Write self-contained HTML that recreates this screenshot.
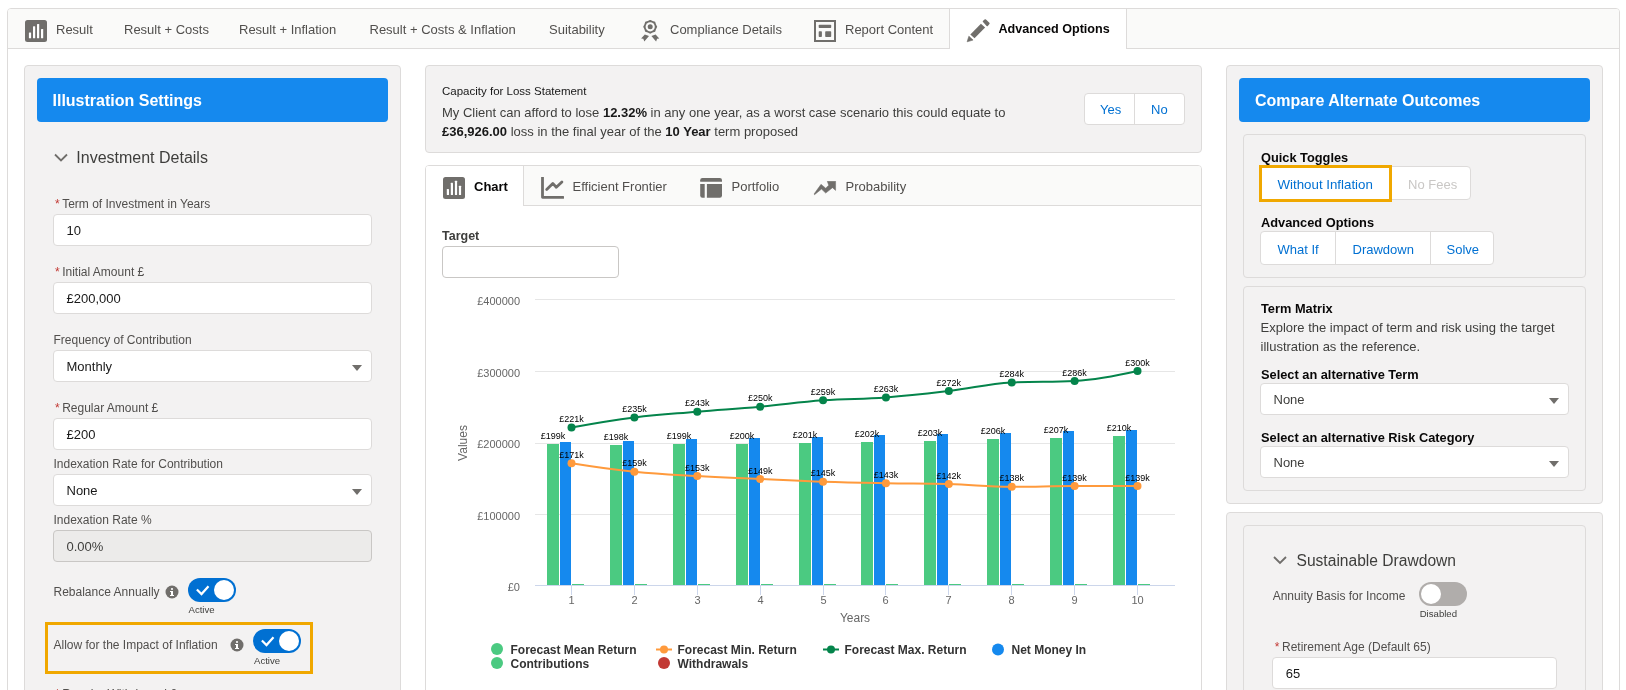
<!DOCTYPE html>
<html><head><meta charset="utf-8">
<style>
*{box-sizing:border-box;margin:0;padding:0}
.wrap{position:absolute;left:0;top:0;width:1626px;height:690px;will-change:transform}
html,body{width:1626px;height:690px;overflow:hidden;background:#fff;font-family:"Liberation Sans",sans-serif;color:#3e3e3c}
.a{position:absolute}
.t{position:absolute;line-height:1;white-space:nowrap}
.box{position:absolute;border:1px solid #dddbda;border-radius:4px;background:#f3f2f2}
.inp{position:absolute;border:1px solid #dddbda;border-radius:4px;background:#fff}
.hdr{position:absolute;background:#1589ee;border-radius:4px}
.hdrt{position:absolute;line-height:1;white-space:nowrap;color:#fff;font-weight:700;font-size:16px}
.tab{position:absolute;line-height:1;white-space:nowrap;font-size:13px;color:#514f4d;top:23px}
.lbl{position:absolute;line-height:1;white-space:nowrap;font-size:12px;color:#514f4d}
.req{color:#c23934}
.val{position:absolute;line-height:1;white-space:nowrap;font-size:13px;color:#181818}
.link{color:#0070d2}
.btn{position:absolute;border:1px solid #dddbda;background:#fff}
.tri{position:absolute;width:0;height:0;border-left:5px solid transparent;border-right:5px solid transparent;border-top:6px solid #706e6b}
</style></head><body><div class="wrap">

<!-- OUTER CARD -->
<div class="a" style="left:7px;top:8px;width:1613px;height:700px;border:1px solid #dddbda;border-radius:4px;background:#fff"></div>
<div class="a" style="left:8px;top:9px;width:1611px;height:40px;background:#fafaf9;border-bottom:1px solid #dddbda;border-radius:3px 3px 0 0"></div>
<!-- active tab -->
<div class="a" style="left:949px;top:9px;width:178px;height:40px;background:#fff;border-left:1px solid #dddbda;border-right:1px solid #dddbda"></div>

<!-- tab icons -->
<svg class="a" style="left:25px;top:20px" width="22" height="22" viewBox="0 0 22 22"><rect x="0" y="0" width="22" height="22" rx="2.5" fill="#706e6b"/><rect x="3.9" y="12.5" width="2.2" height="5.7" rx="0.5" fill="#fff"/><rect x="8" y="6.3" width="2.2" height="11.9" rx="0.5" fill="#fff"/><rect x="12" y="4" width="2.2" height="14.2" rx="0.5" fill="#fff"/><rect x="16" y="8.9" width="2.2" height="9.3" rx="0.5" fill="#fff"/></svg>
<div class="tab" style="left:56px">Result</div>
<div class="tab" style="left:124px">Result + Costs</div>
<div class="tab" style="left:239px">Result + Inflation</div>
<div class="tab" style="left:369.5px">Result + Costs &amp; Inflation</div>
<div class="tab" style="left:549px">Suitability</div>
<svg class="a" style="left:640px;top:20px" width="21" height="23" viewBox="0 0 21 23"><polygon points="10.20,-0.20 12.61,0.98 15.15,1.85 16.02,4.39 17.20,6.80 16.02,9.21 15.15,11.75 12.61,12.62 10.20,13.80 7.79,12.62 5.25,11.75 4.38,9.21 3.20,6.80 4.38,4.39 5.25,1.85 7.79,0.98" fill="#706e6b"/><circle cx="10.2" cy="6.8" r="4.6" fill="#fafaf9"/><circle cx="10.2" cy="6.8" r="2.5" fill="#706e6b"/><polygon points="4.8,14.4 9,16.1 4.3,21.6 3.3,18.8 1.1,18.6" fill="#706e6b"/><polygon points="15.6,14.4 11.4,16.1 16.1,21.6 17.1,18.8 19.3,18.6" fill="#706e6b"/></svg>
<div class="tab" style="left:670px">Compliance Details</div>
<svg class="a" style="left:814px;top:20px" width="22" height="22" viewBox="0 0 22 22"><rect x="1" y="1" width="20" height="20" fill="none" stroke="#706e6b" stroke-width="2"/><rect x="4.7" y="4.7" width="12.5" height="3.2" rx="0.7" fill="#706e6b"/><rect x="4.7" y="11.2" width="3.2" height="5.8" rx="0.7" fill="#706e6b"/><rect x="11.2" y="11.2" width="6" height="5.8" rx="0.7" fill="#706e6b"/></svg>
<div class="tab" style="left:845px">Report Content</div>
<svg class="a" style="left:966px;top:19px" width="24" height="24" viewBox="0 0 24 24"><polygon points="14.94,4.82 19.12,8.52 8.53,19.35 4.34,15.41" fill="#706e6b"/><polygon points="2.87,17.14 7.05,21.08 1.14,22.8" fill="#706e6b" stroke="#706e6b" stroke-width="0.6" stroke-linejoin="round"/><polygon points="17.6,2.4 19.4,1.0 22.8,4.4 21.2,6.4" fill="#706e6b" stroke="#706e6b" stroke-width="1.6" stroke-linejoin="round"/></svg>
<div class="tab" style="left:998.5px;top:23.4px;font-weight:700;color:#080707;font-size:12.6px">Advanced Options</div>

<!-- LEFT PANEL -->
<div class="box" style="left:24px;top:65px;width:377px;height:640px"></div>
<div class="hdr" style="left:37px;top:78px;width:351px;height:44px"></div>
<div class="hdrt" style="left:52.5px;top:93px">Illustration Settings</div>

<svg class="a" style="left:53px;top:152px" width="16" height="12" viewBox="0 0 16 12"><path d="M2 2.5 L8 8.5 L14 2.5" fill="none" stroke="#706e6b" stroke-width="1.8"/></svg>
<div class="t" style="left:76.3px;top:149.5px;font-size:16px;color:#3e3e3c">Investment Details</div>

<div class="lbl" style="left:55px;top:198.0px"><span class="req">*</span><span style="margin-left:2.5px">Term of Investment in Years</span></div>
<div class="inp" style="left:53px;top:214px;width:319px;height:32px"></div>
<div class="val" style="left:66.5px;top:224px">10</div>

<div class="lbl" style="left:55px;top:266.3px"><span class="req">*</span><span style="margin-left:2.5px">Initial Amount £</span></div>
<div class="inp" style="left:53px;top:282px;width:319px;height:32px"></div>
<div class="val" style="left:66.5px;top:292px">£200,000</div>

<div class="lbl" style="left:53.5px;top:334.3px">Frequency of Contribution</div>
<div class="inp" style="left:53px;top:350px;width:319px;height:32px"></div>
<div class="val" style="left:66.5px;top:360px">Monthly</div>
<div class="tri" style="left:352px;top:365px"></div>

<div class="lbl" style="left:55px;top:402.3px"><span class="req">*</span><span style="margin-left:2.5px">Regular Amount £</span></div>
<div class="inp" style="left:53px;top:418px;width:319px;height:32px"></div>
<div class="val" style="left:66.5px;top:428px">£200</div>

<div class="lbl" style="left:53.5px;top:458.3px">Indexation Rate for Contribution</div>
<div class="inp" style="left:53px;top:474px;width:319px;height:32px"></div>
<div class="val" style="left:66.5px;top:484px">None</div>
<div class="tri" style="left:352px;top:489px"></div>

<div class="lbl" style="left:53.5px;top:514.3px">Indexation Rate %</div>
<div class="inp" style="left:53px;top:530px;width:319px;height:32px;background:#ecebea;border-color:#c9c7c5"></div>
<div class="val" style="left:66.5px;top:540px;color:#3e3e3c">0.00%</div>

<div class="lbl" style="left:53.5px;top:586.3px">Rebalance Annually</div>
<svg class="a" style="left:165px;top:585px" width="14" height="14" viewBox="0 0 14 14"><circle cx="7" cy="7" r="6.5" fill="#706e6b"/><rect x="6" y="6" width="2" height="5" fill="#fff"/><circle cx="7" cy="4" r="1.1" fill="#fff"/><rect x="5" y="6" width="2" height="1" fill="#fff"/><rect x="5" y="10" width="4" height="1" fill="#fff"/></svg>
<svg class="a" style="left:188px;top:578px" width="48" height="24" viewBox="0 0 48 24"><rect x="0" y="0" width="48" height="24" rx="12" fill="#0070d2"/><circle cx="36" cy="12" r="10" fill="#fff"/><path d="M8.9 11.5 L13.5 16.1 L20.5 8.2" fill="none" stroke="#fff" stroke-width="2.2"/></svg>
<div class="t" style="left:188.5px;top:605px;font-size:9.6px;color:#3e3e3c">Active</div>

<div class="a" style="left:45px;top:622px;width:268px;height:52px;border:3px solid #f0a800"></div>
<div class="lbl" style="left:53.5px;top:639.4px">Allow for the Impact of Inflation</div>
<svg class="a" style="left:230px;top:638px" width="14" height="14" viewBox="0 0 14 14"><circle cx="7" cy="7" r="6.5" fill="#706e6b"/><rect x="6" y="6" width="2" height="5" fill="#fff"/><circle cx="7" cy="4" r="1.1" fill="#fff"/><rect x="5" y="6" width="2" height="1" fill="#fff"/><rect x="5" y="10" width="4" height="1" fill="#fff"/></svg>
<svg class="a" style="left:253px;top:629px" width="48" height="24" viewBox="0 0 48 24"><rect x="0" y="0" width="48" height="24" rx="12" fill="#0070d2"/><circle cx="36" cy="12" r="10" fill="#fff"/><path d="M8.9 11.5 L13.5 16.1 L20.5 8.2" fill="none" stroke="#fff" stroke-width="2.2"/></svg>
<div class="t" style="left:254px;top:656px;font-size:9.6px;color:#3e3e3c">Active</div>

<div class="lbl" style="left:55px;top:687.7px"><span class="req">*</span><span style="margin-left:2.5px">Regular Withdrawal £</span></div>

<!-- MIDDLE -->
<div class="box" style="left:425px;top:65px;width:777px;height:88px"></div>
<div class="t" style="left:442px;top:85.8px;font-size:11.5px;color:#181818">Capacity for Loss Statement</div>
<div class="t" style="left:442px;top:105.5px;font-size:13px;color:#3e3e3c">My Client can afford to lose <b style="color:#181818">12.32%</b> in any one year, as a worst case scenario this could equate to</div>
<div class="t" style="left:442px;top:124.7px;font-size:13px;color:#3e3e3c"><b style="color:#181818">£36,926.00</b> loss in the final year of the <b style="color:#181818">10 Year</b> term proposed</div>
<div class="btn" style="left:1084px;top:93px;width:101px;height:32px;border-radius:4px"></div>
<div class="a" style="left:1134px;top:94px;width:1px;height:30px;background:#dddbda"></div>
<div class="t link" style="left:1100px;top:103px;font-size:13px">Yes</div>
<div class="t link" style="left:1151px;top:103px;font-size:13px">No</div>

<div class="a" style="left:425px;top:165px;width:777px;height:600px;border:1px solid #dddbda;border-radius:4px;background:#fff"></div>
<div class="a" style="left:426px;top:166px;width:775px;height:40px;background:#fafaf9;border-bottom:1px solid #dddbda;border-radius:3px 3px 0 0"></div>
<div class="a" style="left:426px;top:166px;width:98px;height:40px;background:#fff;border-right:1px solid #dddbda;border-radius:3px 0 0 0"></div>
<svg class="a" style="left:443px;top:177px" width="22" height="22" viewBox="0 0 22 22"><rect x="0" y="0" width="22" height="22" rx="2.5" fill="#706e6b"/><rect x="3.8" y="11.9" width="2.2" height="6.2" rx="0.5" fill="#fff"/><rect x="7.8" y="5.8" width="2.2" height="12.3" rx="0.5" fill="#fff"/><rect x="11.9" y="3.8" width="2.2" height="14.3" rx="0.5" fill="#fff"/><rect x="15.9" y="8.7" width="2.2" height="9.4" rx="0.5" fill="#fff"/></svg>
<div class="t" style="left:474px;top:179.5px;font-size:13px;font-weight:700;color:#080707">Chart</div>
<svg class="a" style="left:541px;top:177px" width="23" height="23" viewBox="0 0 23 23"><path d="M1.5 0.3 V20.3 H22" fill="none" stroke="#706e6b" stroke-width="2.8" stroke-linecap="round" stroke-linejoin="round"/><path d="M5.7 12.5 L11.8 6.4 L15.3 10.2 L20.9 4.9" fill="none" stroke="#706e6b" stroke-width="2.8" stroke-linecap="round" stroke-linejoin="round"/></svg>
<div class="t" style="left:572.5px;top:179.5px;font-size:13px;color:#514f4d">Efficient Frontier</div>
<svg class="a" style="left:700px;top:177px" width="23" height="22" viewBox="0 0 23 22"><path d="M0.2 3.2 Q0.2 1 2.4 1 H19.8 Q22 1 22 3.2 V4.7 H0.2 Z" fill="#706e6b"/><path d="M0.2 6.9 H4.7 V20.8 H2.4 Q0.2 20.8 0.2 18.6 Z" fill="#706e6b"/><path d="M6.9 6.9 H22 V18.6 Q22 20.8 19.8 20.8 H6.9 Z" fill="#706e6b"/></svg>
<div class="t" style="left:731.5px;top:179.5px;font-size:13px;color:#514f4d">Portfolio</div>
<svg class="a" style="left:813px;top:181px" width="24" height="15" viewBox="0 0 24 15"><polygon points="1.06,13 8,3.35 12.7,7.2 15.7,4.25 14.3,0.2 22.6,0.2 22.6,9.4 19.5,6.7 12.7,12.1 8.5,8.1 1.5,13.7" fill="#706e6b" stroke="#706e6b" stroke-width="0.5" stroke-linejoin="round"/></svg>
<div class="t" style="left:845.5px;top:179.5px;font-size:13px;color:#514f4d">Probability</div>

<div class="t" style="left:442px;top:229.8px;font-size:12.5px;font-weight:700;color:#3e3e3c">Target</div>
<div class="inp" style="left:442px;top:246px;width:177px;height:32px;border-color:#c9c7c5"></div>

<!-- RIGHT PANEL 1 -->
<div class="box" style="left:1226px;top:65px;width:377px;height:439px"></div>
<div class="hdr" style="left:1239px;top:78px;width:351px;height:44px"></div>
<div class="hdrt" style="left:1255px;top:93px">Compare Alternate Outcomes</div>

<div class="box" style="left:1243px;top:134px;width:343px;height:144px"></div>
<div class="t" style="left:1261px;top:151.8px;font-size:12.8px;font-weight:700;color:#080707">Quick Toggles</div>
<div class="btn" style="left:1259px;top:166px;width:212px;height:34px;border-radius:4px"></div>
<div class="t" style="left:1408px;top:178px;font-size:13px;color:#c9c7c5">No Fees</div>
<div class="a" style="left:1259px;top:165px;width:133px;height:37px;border:3px solid #f0a800;background:#fff"></div>
<div class="t link" style="left:1277.5px;top:178px;font-size:13.3px">Without Inflation</div>

<div class="t" style="left:1261px;top:216.8px;font-size:12.8px;font-weight:700;color:#080707">Advanced Options</div>
<div class="btn" style="left:1260px;top:231px;width:234px;height:34px;border-radius:4px"></div>
<div class="a" style="left:1335px;top:232px;width:1px;height:32px;background:#dddbda"></div>
<div class="a" style="left:1430px;top:232px;width:1px;height:32px;background:#dddbda"></div>
<div class="t link" style="left:1277.5px;top:243px;font-size:13px">What If</div>
<div class="t link" style="left:1352.5px;top:243px;font-size:13px">Drawdown</div>
<div class="t link" style="left:1446.5px;top:243px;font-size:13px">Solve</div>

<div class="box" style="left:1243px;top:286px;width:343px;height:205px"></div>
<div class="t" style="left:1261px;top:303.3px;font-size:12.8px;font-weight:700;color:#080707">Term Matrix</div>
<div class="t" style="left:1260.5px;top:321.4px;font-size:13px;color:#3e3e3c">Explore the impact of term and risk using the target</div>
<div class="t" style="left:1260.5px;top:340.3px;font-size:13px;color:#3e3e3c">illustration as the reference.</div>
<div class="t" style="left:1261px;top:368.8px;font-size:12.8px;font-weight:700;color:#080707">Select an alternative Term</div>
<div class="inp" style="left:1260px;top:383px;width:309px;height:32px"></div>
<div class="val" style="left:1273.5px;top:392.6px;color:#3e3e3c">None</div>
<div class="tri" style="left:1549px;top:398px"></div>
<div class="t" style="left:1261px;top:431.8px;font-size:12.8px;font-weight:700;color:#080707">Select an alternative Risk Category</div>
<div class="inp" style="left:1260px;top:446px;width:309px;height:32px"></div>
<div class="val" style="left:1273.5px;top:455.8px;color:#3e3e3c">None</div>
<div class="tri" style="left:1549px;top:461px"></div>

<!-- RIGHT PANEL 2 -->
<div class="box" style="left:1226px;top:512px;width:377px;height:300px"></div>
<div class="box" style="left:1243px;top:525px;width:343px;height:300px"></div>
<svg class="a" style="left:1272px;top:554px" width="16" height="12" viewBox="0 0 16 12"><path d="M2 3 L8 9 L14 3" fill="none" stroke="#706e6b" stroke-width="1.8"/></svg>
<div class="t" style="left:1296.5px;top:552.6px;font-size:15.6px;color:#3e3e3c">Sustainable Drawdown</div>
<div class="lbl" style="left:1272.7px;top:589.5px;font-size:12px">Annuity Basis for Income</div>
<svg class="a" style="left:1419px;top:582px" width="48" height="24" viewBox="0 0 48 24"><rect x="0" y="0" width="48" height="24" rx="12" fill="#b0adab"/><circle cx="12" cy="12" r="10" fill="#fff"/></svg>
<div class="t" style="left:1419.7px;top:608.5px;font-size:9.6px;color:#3e3e3c">Disabled</div>
<div class="lbl" style="left:1274.8px;top:641.2px"><span class="req">*</span><span style="margin-left:2.5px">Retirement Age (Default 65)</span></div>
<div class="inp" style="left:1272px;top:657px;width:285px;height:32px"></div>
<div class="val" style="left:1285.8px;top:666.7px">65</div>

<!-- CHART -->
<svg id="chart" class="a" style="left:0;top:0" width="1626" height="690" viewBox="0 0 1626 690" font-family="Liberation Sans, sans-serif">
<line x1="535" y1="299.5" x2="1175" y2="299.5" stroke="#e6e6e6" stroke-width="1"/>
<line x1="535" y1="371.5" x2="1175" y2="371.5" stroke="#e6e6e6" stroke-width="1"/>
<line x1="535" y1="443.5" x2="1175" y2="443.5" stroke="#e6e6e6" stroke-width="1"/>
<line x1="535" y1="514.5" x2="1175" y2="514.5" stroke="#e6e6e6" stroke-width="1"/>
<text x="520" y="305" text-anchor="end" font-size="11" fill="#666666">£400000</text>
<text x="520" y="376.5" text-anchor="end" font-size="11" fill="#666666">£300000</text>
<text x="520" y="448" text-anchor="end" font-size="11" fill="#666666">£200000</text>
<text x="520" y="519.5" text-anchor="end" font-size="11" fill="#666666">£100000</text>
<text x="520" y="590.5" text-anchor="end" font-size="11" fill="#666666">£0</text>
<text transform="translate(466.5,443) rotate(-90)" text-anchor="middle" font-size="12" fill="#666666">Values</text>
<rect x="547" y="444" width="12" height="141" fill="#4bca81"/>
<rect x="560" y="442" width="11" height="143" fill="#1589ee"/>
<rect x="572" y="584" width="12" height="1" fill="#4bca81"/>
<rect x="610" y="445" width="12" height="140" fill="#4bca81"/>
<rect x="623" y="441" width="11" height="144" fill="#1589ee"/>
<rect x="635" y="584" width="12" height="1" fill="#4bca81"/>
<rect x="673" y="444" width="12" height="141" fill="#4bca81"/>
<rect x="686" y="439" width="11" height="146" fill="#1589ee"/>
<rect x="698" y="584" width="12" height="1" fill="#4bca81"/>
<rect x="736" y="444" width="12" height="141" fill="#4bca81"/>
<rect x="749" y="438" width="11" height="147" fill="#1589ee"/>
<rect x="761" y="584" width="12" height="1" fill="#4bca81"/>
<rect x="799" y="443" width="12" height="142" fill="#4bca81"/>
<rect x="812" y="437" width="11" height="148" fill="#1589ee"/>
<rect x="824" y="584" width="12" height="1" fill="#4bca81"/>
<rect x="861" y="442" width="12" height="143" fill="#4bca81"/>
<rect x="874" y="435" width="11" height="150" fill="#1589ee"/>
<rect x="886" y="584" width="12" height="1" fill="#4bca81"/>
<rect x="924" y="441" width="12" height="144" fill="#4bca81"/>
<rect x="937" y="434" width="11" height="151" fill="#1589ee"/>
<rect x="949" y="584" width="12" height="1" fill="#4bca81"/>
<rect x="987" y="439" width="12" height="146" fill="#4bca81"/>
<rect x="1000" y="433" width="11" height="152" fill="#1589ee"/>
<rect x="1012" y="584" width="12" height="1" fill="#4bca81"/>
<rect x="1050" y="438" width="12" height="147" fill="#4bca81"/>
<rect x="1063" y="431" width="11" height="154" fill="#1589ee"/>
<rect x="1075" y="584" width="12" height="1" fill="#4bca81"/>
<rect x="1113" y="436" width="12" height="149" fill="#4bca81"/>
<rect x="1126" y="430" width="11" height="155" fill="#1589ee"/>
<rect x="1138" y="584" width="12" height="1" fill="#4bca81"/>
<line x1="535" y1="585.5" x2="1175" y2="585.5" stroke="#ccd6eb" stroke-width="1"/>
<line x1="571.5" y1="586" x2="571.5" y2="595" stroke="#ccd6eb" stroke-width="1"/>
<text x="571.5" y="604" text-anchor="middle" font-size="11" fill="#666666">1</text>
<line x1="634.5" y1="586" x2="634.5" y2="595" stroke="#ccd6eb" stroke-width="1"/>
<text x="634.5" y="604" text-anchor="middle" font-size="11" fill="#666666">2</text>
<line x1="697.5" y1="586" x2="697.5" y2="595" stroke="#ccd6eb" stroke-width="1"/>
<text x="697.5" y="604" text-anchor="middle" font-size="11" fill="#666666">3</text>
<line x1="760.5" y1="586" x2="760.5" y2="595" stroke="#ccd6eb" stroke-width="1"/>
<text x="760.5" y="604" text-anchor="middle" font-size="11" fill="#666666">4</text>
<line x1="823.5" y1="586" x2="823.5" y2="595" stroke="#ccd6eb" stroke-width="1"/>
<text x="823.5" y="604" text-anchor="middle" font-size="11" fill="#666666">5</text>
<line x1="885.5" y1="586" x2="885.5" y2="595" stroke="#ccd6eb" stroke-width="1"/>
<text x="885.5" y="604" text-anchor="middle" font-size="11" fill="#666666">6</text>
<line x1="948.5" y1="586" x2="948.5" y2="595" stroke="#ccd6eb" stroke-width="1"/>
<text x="948.5" y="604" text-anchor="middle" font-size="11" fill="#666666">7</text>
<line x1="1011.5" y1="586" x2="1011.5" y2="595" stroke="#ccd6eb" stroke-width="1"/>
<text x="1011.5" y="604" text-anchor="middle" font-size="11" fill="#666666">8</text>
<line x1="1074.5" y1="586" x2="1074.5" y2="595" stroke="#ccd6eb" stroke-width="1"/>
<text x="1074.5" y="604" text-anchor="middle" font-size="11" fill="#666666">9</text>
<line x1="1137.5" y1="586" x2="1137.5" y2="595" stroke="#ccd6eb" stroke-width="1"/>
<text x="1137.5" y="604" text-anchor="middle" font-size="11" fill="#666666">10</text>
<text x="855" y="622" text-anchor="middle" font-size="12" fill="#666666">Years</text>
<path d="M 571.50 463.24 C 571.50 463.24 609.23 469.24 634.39 471.81 C 659.55 474.39 672.12 474.68 697.28 476.11 C 722.44 477.54 735.01 477.82 760.17 478.97 C 785.33 480.11 797.90 480.97 823.06 481.82 C 848.22 482.68 860.79 482.83 885.95 483.25 C 911.11 483.68 923.68 483.25 948.84 483.97 C 974.00 484.69 986.57 486.83 1011.73 486.83 C 1036.89 486.83 1049.46 486.12 1074.62 486.12 C 1099.78 486.12 1137.51 486.12 1137.51 486.12" fill="none" stroke="#ff9a3c" stroke-width="2"/>
<path d="M 571.50 427.49 C 571.50 427.49 609.23 420.62 634.39 417.48 C 659.55 414.33 672.12 413.90 697.28 411.75 C 722.44 409.61 735.01 409.04 760.17 406.75 C 785.33 404.46 797.90 402.17 823.06 400.31 C 848.22 398.46 860.79 399.31 885.95 397.46 C 911.11 395.60 923.68 394.02 948.84 391.02 C 974.00 388.02 986.57 383.87 1011.73 382.44 C 1036.89 381.01 1049.46 382.44 1074.62 381.01 C 1099.78 379.58 1137.51 371.00 1137.51 371.00" fill="none" stroke="#04844b" stroke-width="2"/>
<circle cx="571.50" cy="463.24" r="4" fill="#ff9a3c"/>
<circle cx="634.39" cy="471.81" r="4" fill="#ff9a3c"/>
<circle cx="697.28" cy="476.11" r="4" fill="#ff9a3c"/>
<circle cx="760.17" cy="478.97" r="4" fill="#ff9a3c"/>
<circle cx="823.06" cy="481.82" r="4" fill="#ff9a3c"/>
<circle cx="885.95" cy="483.25" r="4" fill="#ff9a3c"/>
<circle cx="948.84" cy="483.97" r="4" fill="#ff9a3c"/>
<circle cx="1011.73" cy="486.83" r="4" fill="#ff9a3c"/>
<circle cx="1074.62" cy="486.12" r="4" fill="#ff9a3c"/>
<circle cx="1137.51" cy="486.12" r="4" fill="#ff9a3c"/>
<circle cx="571.50" cy="427.49" r="4" fill="#04844b"/>
<circle cx="634.39" cy="417.48" r="4" fill="#04844b"/>
<circle cx="697.28" cy="411.75" r="4" fill="#04844b"/>
<circle cx="760.17" cy="406.75" r="4" fill="#04844b"/>
<circle cx="823.06" cy="400.31" r="4" fill="#04844b"/>
<circle cx="885.95" cy="397.46" r="4" fill="#04844b"/>
<circle cx="948.84" cy="391.02" r="4" fill="#04844b"/>
<circle cx="1011.73" cy="382.44" r="4" fill="#04844b"/>
<circle cx="1074.62" cy="381.01" r="4" fill="#04844b"/>
<circle cx="1137.51" cy="371.00" r="4" fill="#04844b"/>
<text x="553.0" y="438.5" text-anchor="middle" font-size="9" fill="#000">£199k</text>
<text x="571.5" y="422.0" text-anchor="middle" font-size="9" fill="#000">£221k</text>
<text x="571.5" y="457.7" text-anchor="middle" font-size="9" fill="#000">£171k</text>
<text x="616.0" y="439.5" text-anchor="middle" font-size="9" fill="#000">£198k</text>
<text x="634.4" y="412.0" text-anchor="middle" font-size="9" fill="#000">£235k</text>
<text x="634.4" y="466.3" text-anchor="middle" font-size="9" fill="#000">£159k</text>
<text x="679.0" y="438.5" text-anchor="middle" font-size="9" fill="#000">£199k</text>
<text x="697.3" y="406.3" text-anchor="middle" font-size="9" fill="#000">£243k</text>
<text x="697.3" y="470.6" text-anchor="middle" font-size="9" fill="#000">£153k</text>
<text x="742.0" y="438.5" text-anchor="middle" font-size="9" fill="#000">£200k</text>
<text x="760.2" y="401.2" text-anchor="middle" font-size="9" fill="#000">£250k</text>
<text x="760.2" y="473.5" text-anchor="middle" font-size="9" fill="#000">£149k</text>
<text x="805.0" y="437.5" text-anchor="middle" font-size="9" fill="#000">£201k</text>
<text x="823.1" y="394.8" text-anchor="middle" font-size="9" fill="#000">£259k</text>
<text x="823.1" y="476.3" text-anchor="middle" font-size="9" fill="#000">£145k</text>
<text x="867.0" y="436.5" text-anchor="middle" font-size="9" fill="#000">£202k</text>
<text x="886.0" y="392.0" text-anchor="middle" font-size="9" fill="#000">£263k</text>
<text x="886.0" y="477.8" text-anchor="middle" font-size="9" fill="#000">£143k</text>
<text x="930.0" y="435.5" text-anchor="middle" font-size="9" fill="#000">£203k</text>
<text x="948.8" y="385.5" text-anchor="middle" font-size="9" fill="#000">£272k</text>
<text x="948.8" y="478.5" text-anchor="middle" font-size="9" fill="#000">£142k</text>
<text x="993.0" y="433.5" text-anchor="middle" font-size="9" fill="#000">£206k</text>
<text x="1011.7" y="376.9" text-anchor="middle" font-size="9" fill="#000">£284k</text>
<text x="1011.7" y="481.3" text-anchor="middle" font-size="9" fill="#000">£138k</text>
<text x="1056.0" y="432.5" text-anchor="middle" font-size="9" fill="#000">£207k</text>
<text x="1074.6" y="375.5" text-anchor="middle" font-size="9" fill="#000">£286k</text>
<text x="1074.6" y="480.6" text-anchor="middle" font-size="9" fill="#000">£139k</text>
<text x="1119.0" y="430.5" text-anchor="middle" font-size="9" fill="#000">£210k</text>
<text x="1137.5" y="365.5" text-anchor="middle" font-size="9" fill="#000">£300k</text>
<text x="1137.5" y="480.6" text-anchor="middle" font-size="9" fill="#000">£139k</text>
<circle cx="497" cy="649" r="6" fill="#4bca81"/><text x="510.5" y="653.5" font-size="12" font-weight="700" fill="#333333">Forecast Mean Return</text>
<circle cx="497" cy="663" r="6" fill="#4bca81"/><text x="510.5" y="667.5" font-size="12" font-weight="700" fill="#333333">Contributions</text>
<line x1="656" y1="649.5" x2="672" y2="649.5" stroke="#ff9a3c" stroke-width="2"/><circle cx="664" cy="649.5" r="4" fill="#ff9a3c"/><text x="677.5" y="653.5" font-size="12" font-weight="700" fill="#333333">Forecast Min. Return</text>
<circle cx="664" cy="663" r="6" fill="#c23934"/><text x="677.5" y="667.5" font-size="12" font-weight="700" fill="#333333">Withdrawals</text>
<line x1="823" y1="649.5" x2="839" y2="649.5" stroke="#04844b" stroke-width="2"/><circle cx="831" cy="649.5" r="4" fill="#04844b"/><text x="844.5" y="653.5" font-size="12" font-weight="700" fill="#333333">Forecast Max. Return</text>
<circle cx="998" cy="649.5" r="6" fill="#1589ee"/><text x="1011.5" y="653.5" font-size="12" font-weight="700" fill="#333333">Net Money In</text>
</svg>

</div></body></html>
